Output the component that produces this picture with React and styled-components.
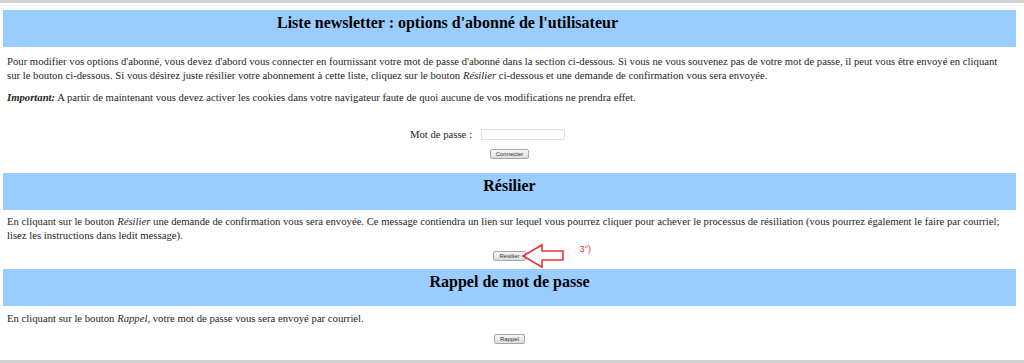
import React from "react";
import styled, { createGlobalStyle } from "styled-components";

const Global = createGlobalStyle`
  html, body {
    margin: 0;
    padding: 0;
    background: #ffffff;
  }
  body {
    font-family: "Liberation Serif", "Times New Roman", serif;
  }
`;

const Page = styled.div`
  width: 1024px;
  height: 363px;
  box-sizing: border-box;
  border-top: 3px solid #d0d0d0;
  border-bottom: 3px solid #d0d0d0;
  padding: 7px 8px 0 3px;
  overflow: hidden;
`;

const Band = styled.div`
  display: flex;
  height: 37px;
  background: #99ccff;
  margin-top: ${(p) => p.$top || 0}px;
`;

const Title = styled.h2`
  flex: 1;
  margin: 0;
  padding-top: 3px;
  text-align: center;
  font-size: 16px;
  font-weight: bold;
  color: #000;
  line-height: 19px;
`;

const Side = styled.div`
  width: 124px;
`;

const Text = styled.p`
  margin: ${(p) => p.$top || 0}px 8px 0 4px;
  font-size: 10.7px;
  line-height: ${(p) => p.$lh || 14}px;
  color: #262626;
  em {
    font-style: italic;
  }
`;

const FormRow = styled.div`
  display: flex;
  align-items: center;
  justify-content: center;
  gap: 9px;
  margin-top: ${(p) => p.$top || 0}px;
  padding-right: 44px;
`;

const Label = styled.label`
  font-size: 10.7px;
  color: #262626;
`;

const Input = styled.input`
  width: 82px;
  height: 9px;
  box-sizing: content-box;
  padding: 0;
  border: 1px solid #e2e2e2;
  outline: none;
`;

const ButtonRow = styled.div`
  position: relative;
  display: flex;
  justify-content: center;
  height: 10px;
  margin-top: ${(p) => p.$top || 0}px;
`;

const Button = styled.button`
  height: 10px;
  padding: 0 5px;
  box-sizing: border-box;
  font-family: "Liberation Sans", Arial, sans-serif;
  font-size: 6px;
  line-height: 8px;
  color: #333;
  background: linear-gradient(#f6f6f6, #dcdcdc);
  border: 1px solid #a8a8a8;
  border-radius: 2px;
`;

const Arrow = styled.svg`
  position: absolute;
  left: calc(50% + 11px);
  top: -8px;
`;

const Note = styled.span`
  position: absolute;
  left: calc(50% + 70px);
  top: -7px;
  font-family: "Liberation Sans", Arial, sans-serif;
  font-size: 9px;
  color: #e8343a;
`;

export default function App() {
  return (
    <>
      <Global />
      <Page>
        <Band>
          <Title>Liste newsletter : options d'abonné de l'utilisateur</Title>
          <Side />
        </Band>
        <Text $top={7}>
          Pour modifier vos options d'abonné, vous devez d'abord vous connecter
          en fournissant votre mot de passe d'abonné dans la section ci-dessous.
          Si vous ne vous souvenez pas de votre mot de passe, il peut vous être
          envoyé en cliquant sur le bouton ci-dessous. Si vous désirez juste
          résilier votre abonnement à cette liste, cliquez sur le bouton{" "}
          <em>Résilier</em> ci-dessous et une demande de confirmation vous sera
          envoyée.
        </Text>
        <Text $top={8}>
          <b>
            <em>Important:</em>
          </b>{" "}
          A partir de maintenant vous devez activer les cookies dans votre
          navigateur faute de quoi aucune de vos modifications ne prendra effet.
        </Text>
        <FormRow $top={24}>
          <Label>Mot de passe :</Label>
          <Input type="password" />
        </FormRow>
        <ButtonRow $top={9}>
          <Button>Connecter</Button>
        </ButtonRow>

        <Band $top={14}>
          <Title>Résilier</Title>
        </Band>
        <Text $top={5} $lh={13.5}>
          En cliquant sur le bouton <em>Résilier</em> une demande de
          confirmation vous sera envoyée. Ce message contiendra un lien sur
          lequel vous pourrez cliquer pour achever le processus de résiliation
          (vous pourrez également le faire par courriel; lisez les instructions
          dans ledit message).
        </Text>
        <ButtonRow $top={9}>
          <Button>Résilier</Button>
          <Arrow width="44" height="26" viewBox="0 0 44 26">
            <path
              d="M2 13 L21 2 L21 8 L42 8 L42 17 L21 17 L21 24 Z"
              fill="none"
              stroke="#e8343a"
              strokeWidth="1.6"
              strokeLinejoin="miter"
            />
          </Arrow>
          <Note>3°)</Note>
        </ButtonRow>

        <Band $top={8}>
          <Title>Rappel de mot de passe</Title>
        </Band>
        <Text $top={5}>
          En cliquant sur le bouton <em>Rappel</em>, votre mot de passe vous
          sera envoyé par courriel.
        </Text>
        <ButtonRow $top={9}>
          <Button>Rappel</Button>
        </ButtonRow>
      </Page>
    </>
  );
}
